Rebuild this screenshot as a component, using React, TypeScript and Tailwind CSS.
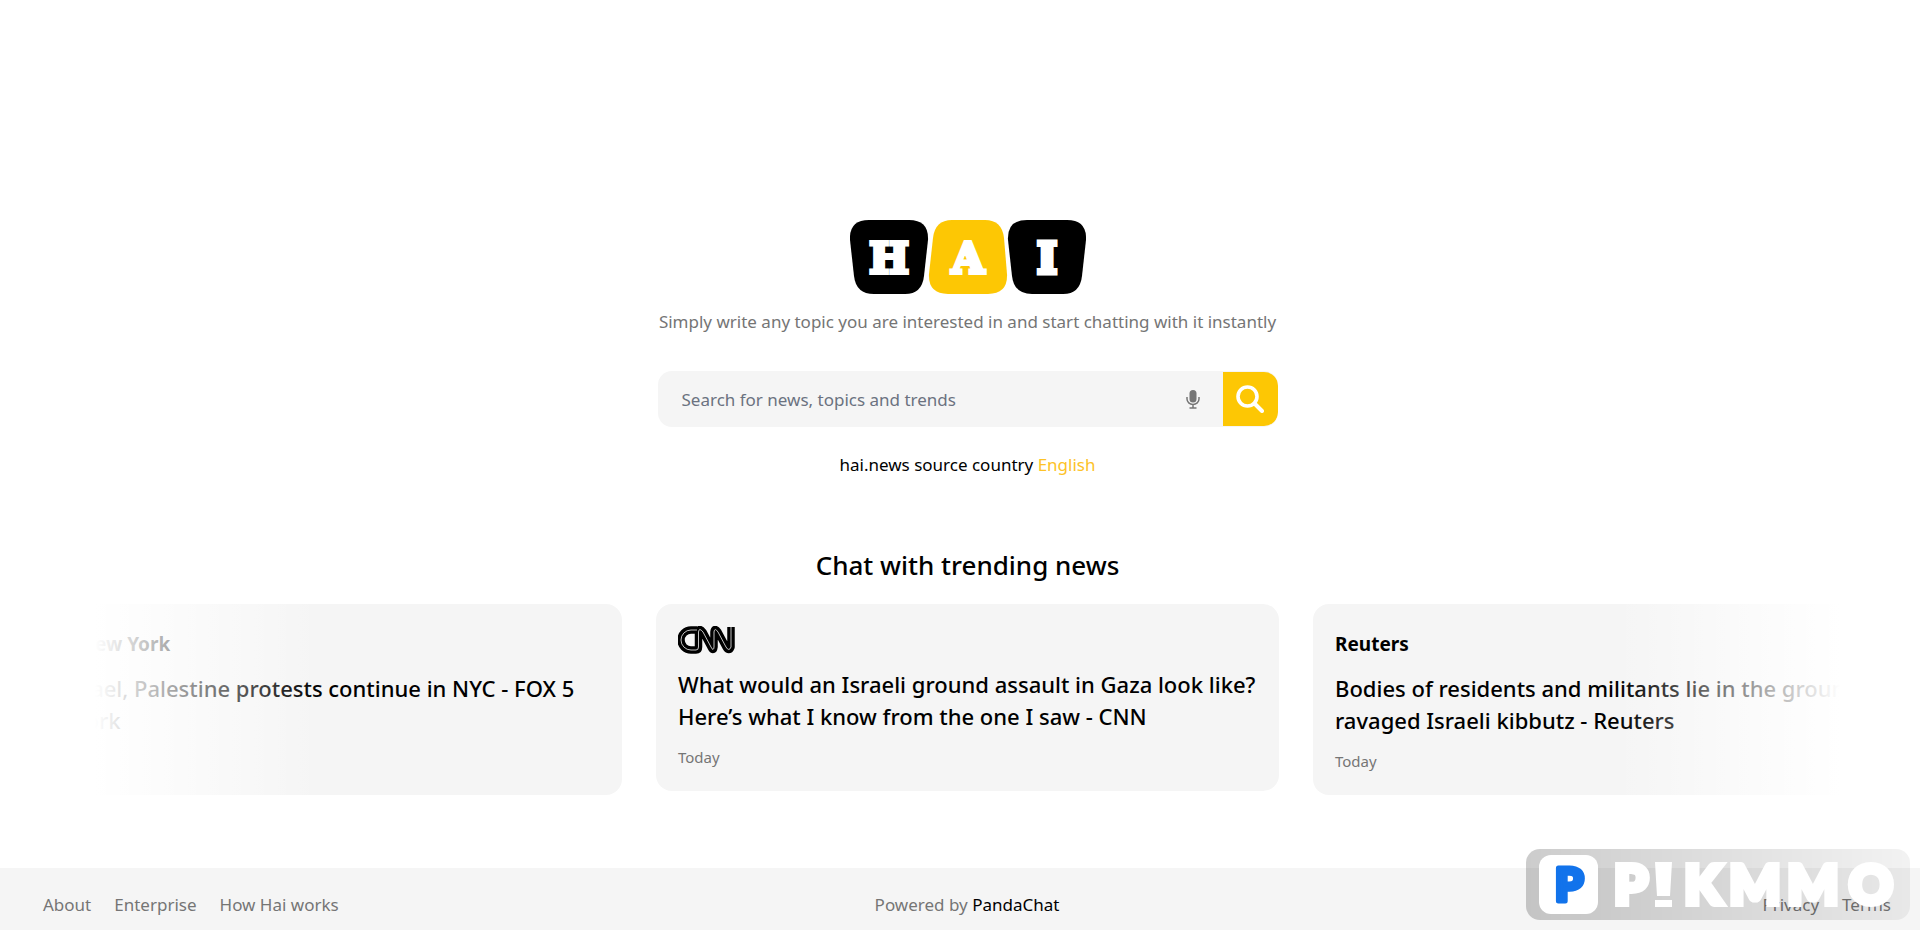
const FONT = "font-['Noto_Sans','Open_Sans',sans-serif]";

type Story = { source: string; title: string; date: string };

const stories: Story[] = [
  { source: "FOX 5 New York", title: "Pro-Israel, Palestine protests continue in NYC - FOX 5 New York", date: "Today" },
  { source: "CNN", title: "What would an Israeli ground assault in Gaza look like? Here’s what I know from the one I saw - CNN", date: "Today" },
  { source: "Reuters", title: "Bodies of residents and militants lie in the grounds of ravaged Israeli kibbutz - Reuters", date: "Today" },
];

function HaiLogo() {
  const wideTop = "M19 0H59Q79 0 78 20L74 56Q72 74 55 74H24Q6 74 4 56L0 20Q-1 0 19 0Z";
  const wideBottom = "M23 0H56Q73 0 75 18L78 54Q79 74 59 74H19Q-1 74 0 54L4 18Q6 0 23 0Z";
  return (
    <svg viewBox="0 0 236 74" className="h-[74px] w-[236px]" role="img" aria-label="HAI">
      <path d={wideTop} fill="#000" />
      <path d={wideBottom} fill="#fdc704" transform="translate(79 0)" />
      <path d={wideTop} fill="#000" transform="translate(158 0)" />
      <g fill="#fff" stroke="#fff" strokeWidth="4" fontFamily="DejaVu Serif" fontWeight="700" fontSize="42" textAnchor="middle">
        <text x="39" y="53">H</text>
        <text x="118" y="53">A</text>
        <text x="197" y="53" strokeWidth="5">I</text>
      </g>
    </svg>
  );
}

function CnnLogo() {
  const line = "M19 4H13A9.500 9.500 0 0 0 13 24H18Q20.500 24 20.500 21V6Q21 1 25 6L33 21Q35.500 26 36 21V6Q36.500 1 40 6L48 21Q51 26 53 21V1";
  return (
    <svg viewBox="0 0 58 28" className="h-7 w-[58px]" role="img" aria-label="CNN" fill="none" strokeLinejoin="round">
      <path d={line} stroke="#000" strokeWidth="7.500" />
      <path d={line} stroke="#d5d5d5" strokeWidth="0.900" />
    </svg>
  );
}

function StoryCard({ story }: { story: Story }) {
  return (
    <a href="#story" className="block w-[623px] shrink-0 rounded-2xl bg-[#f5f5f5] px-[22px] pt-[22px] pb-[22px]">
      {story.source === "CNN" ? (
        <CnnLogo />
      ) : (
        <span className="block pt-1 text-[19px] leading-7 font-bold">{story.source}</span>
      )}
      <h3 className="mt-[14px] text-[22px] leading-8 font-medium">{story.title}</h3>
      <span className="mt-[13px] block text-[15px] leading-6 text-[#757575]">{story.date}</span>
    </a>
  );
}

function Watermark() {
  return (
    <div className="pointer-events-none fixed right-[10px] bottom-[10px] flex h-[71px] items-center rounded-[14px] bg-linear-to-r from-black/20 to-black/5 px-[13px]">
      <svg viewBox="0 0 358 59" className="h-[59px] w-[358px]" role="img" aria-label="PIKMMO">
        <rect width="59" height="59" rx="12" fill="#fff" />
        <g fontFamily="Lato" fontWeight="900" textAnchor="middle">
          <text x="30" y="46" fontSize="45" fill="#1273eb" stroke="#1273eb" strokeWidth="5" strokeLinejoin="round">P</text>
          <g fill="#fff" stroke="#fff" strokeWidth="6" fontSize="54">
            <text x="92" y="49">P</text>
            <text x="164" y="49">K</text>
            <text x="216" y="49">M</text>
            <text x="274" y="49">M</text>
            <text x="332" y="49">O</text>
          </g>
        </g>
        <path d="M116 7H133L131 41H118ZM116 45H133V52H116Z" fill="#fff" />
      </svg>
    </div>
  );
}

export default function App() {
  return (
    <div className={`${FONT} flex min-h-screen flex-col bg-white text-black`}>
      <main className="flex grow flex-col items-center pt-[220px] pl-[15px]">
        <h1><HaiLogo /></h1>
        <p className="mt-[14px] text-[17px] leading-7 text-[#757575]">
          Simply write any topic you are interested in and start chatting with it instantly
        </p>
        <form className="mt-[35px] flex h-14 w-[620px] items-center overflow-hidden rounded-[14px] bg-[#f5f5f5]" onSubmit={(e) => e.preventDefault()}>
          <input
            type="text"
            aria-label="Search"
            placeholder="Search for news, topics and trends"
            className="h-full min-w-0 grow bg-transparent pl-6 text-[17px] outline-none placeholder:text-[#6b7280]"
          />
          <button type="button" aria-label="Voice search" className="mr-5 flex w-5 justify-center text-[#757575]">
            <svg viewBox="0 0 14 19" className="h-[19px] w-3.5" fill="none" stroke="currentColor">
              <rect x="3.500" y="0" width="7" height="12.500" rx="3.500" fill="currentColor" stroke="none" />
              <path d="M1 7V9A6 5.500 0 0 0 13 9V7M7 14.500V18M3.500 18H10.500" strokeWidth="1.500" />
            </svg>
          </button>
          <button type="submit" aria-label="Search news" className="flex h-[54px] w-[55px] items-center justify-center rounded-r-[14px] bg-[#fdc704]">
            <svg viewBox="0 0 28 28" className="size-7" fill="none" stroke="#fff">
              <circle cx="11.500" cy="11.500" r="9.500" strokeWidth="3.600" />
              <path d="M18.500 18.500L26 26" strokeWidth="4" strokeLinecap="round" />
            </svg>
          </button>
        </form>
        <p className="mt-6 text-[17px] leading-7">
          hai.news source country <a href="#country" className="text-[#fdc227]">English</a>
        </p>
        <section className="mt-[68px] w-full">
          <h2 className="text-center text-[26px] leading-9 font-medium">Chat with trending news</h2>
          <div className="relative mx-20 mt-[21px] flex items-start justify-center gap-[34px] overflow-hidden">
            {stories.map((s) => <StoryCard key={s.source} story={s} />)}
            <div className="pointer-events-none absolute inset-y-0 left-0 w-[225px] bg-linear-to-r from-white to-white/0" />
            <div className="pointer-events-none absolute inset-y-0 right-0 w-[225px] bg-linear-to-l from-white to-white/0" />
          </div>
        </section>
      </main>
      <footer className="grid grid-cols-3 items-center bg-[#f5f5f5] pt-6 pr-[29px] pb-3 pl-[43px] text-[17px] leading-[26px] text-[#757575]">
        <nav className="flex gap-[23px]">
          <a href="#about">About</a>
          <a href="#enterprise">Enterprise</a>
          <a href="#how">How Hai works</a>
        </nav>
        <p className="text-center">Powered by <a href="#panda" className="text-black">PandaChat</a></p>
        <nav className="flex justify-end gap-[23px]">
          <a href="#privacy">Privacy</a>
          <a href="#terms">Terms</a>
        </nav>
      </footer>
      <Watermark />
    </div>
  );
}
